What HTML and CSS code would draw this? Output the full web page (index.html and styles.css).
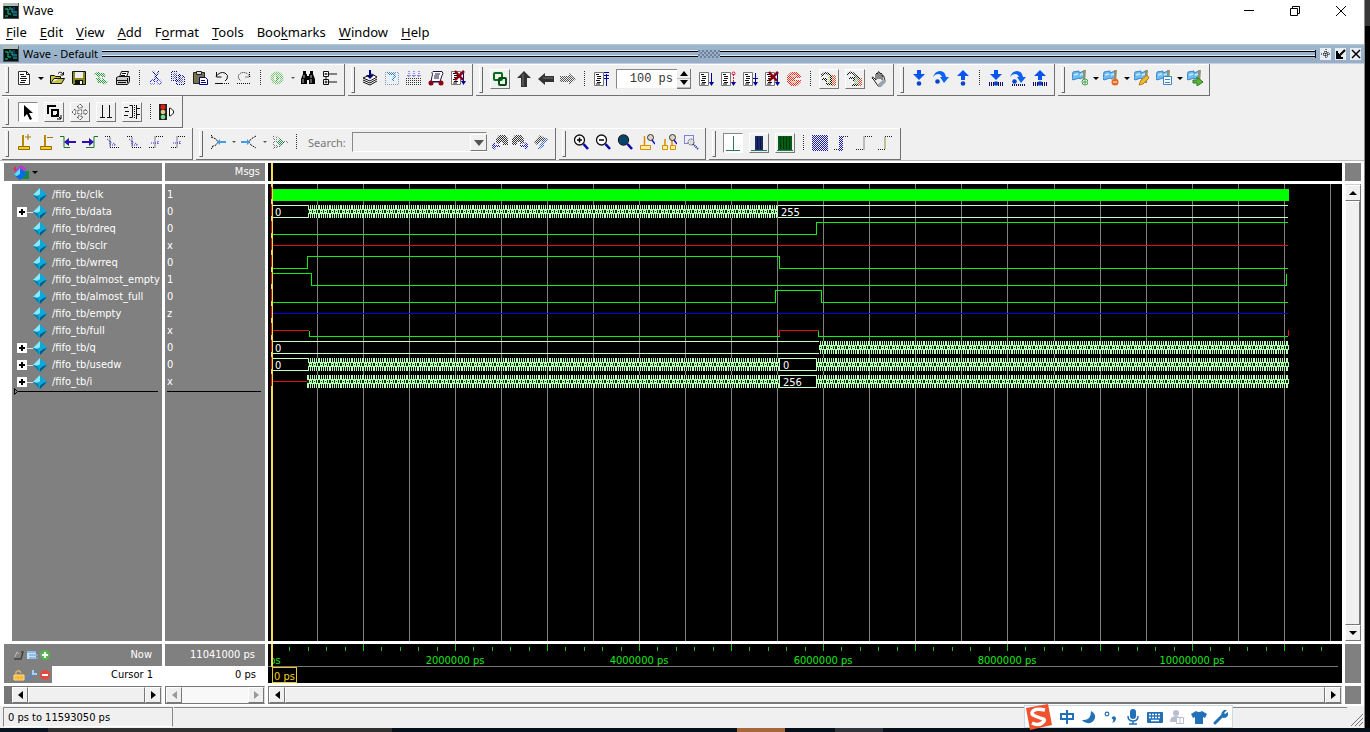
FILE: index.html
```html
<!DOCTYPE html>
<html lang="en">
<head>
<meta charset="utf-8">
<title>Wave</title>
<link rel="stylesheet" href="styles.css">
</head>
<body>
<svg class="defs" aria-hidden="true">
  <defs>
    <pattern id="dither" width="2" height="2" patternUnits="userSpaceOnUse"><path d="M0 0h1v1H0zM1 1h1v1H1z" fill="#f0f0f0"/></pattern>
    <pattern id="bluecheck" width="2" height="2" patternUnits="userSpaceOnUse"><path d="M0 0h1v1H0zM1 1h1v1H1z" fill="#1c1cb0"/></pattern>
    <symbol id="wave" viewBox="0 0 16 16"><path d="M0 0h16v16H0z" fill="#555"/><path d="M1 3h14v12H1z" fill="#021512"/><path d="M0 0h15v3H0z" fill="#b4bdb6"/><path d="M2 6h3v5h3M2 13h3M9 5v4h5M10 12h4M7 4v3" stroke="#1cc795" fill="none"/><path d="M9 10h5M11 4v4" stroke="#2454b8"/></symbol>
    <symbol id="doc" viewBox="0 0 16 16"><path d="M2.500 1.500h8l3 3v10h-11z" fill="#fff" stroke="#333"/><path d="M10.500 1.500v3h3M4 4.500h4M5 6.500h5M4 8.500h7M5 10.500h5M4 12.500h5" stroke="#111" fill="none"/></symbol>
    <symbol id="open" viewBox="0 0 16 16"><path d="M1.500 13V5.500h4l1 1h5V8M1.500 13.500h11l3-5H5z" fill="#c8c53b" stroke="#111"/><path d="M9 3.500q3-3 5 1M14.500 2v3h-3" stroke="#111" fill="none"/></symbol>
    <symbol id="save" viewBox="0 0 16 16"><path d="M1.500 1.500h13v13h-12l-1-1z" fill="#8a8a1c" stroke="#111"/><path d="M4 2h8v6H4z" fill="#eee"/><path d="M4 10h8v4H4z" fill="#111"/><path d="M9 11h2v3H9z" fill="#fff"/></symbol>
    <symbol id="refresh" viewBox="0 0 16 16"><path d="M1 4l5-3v2h5l2 4H9L7 5v3zM15 12l-5 3v-2H5L3 8h4l2 3V8z" fill="#2a9a3a"/></symbol>
    <symbol id="print" viewBox="0 0 16 16"><path d="M4.500 7l2-5.500h7l-2 5.500" fill="#fff" stroke="#111"/><path d="M1.500 7.500l2-1h11v5l-2 3h-11z" fill="#ccc" stroke="#111"/><path d="M2 10.500h11M3 12.500h8M7 3.500h4M6 5.500h4M12.500 8v5" stroke="#111"/></symbol>
    <symbol id="cut" viewBox="0 0 16 16"><path d="M5 1l5 9M11 1L6 10" stroke="#00008b" stroke-width="1.500"/><circle cx="4.500" cy="12" r="2.200" fill="none" stroke="#00f"/><circle cx="11" cy="12" r="2.200" fill="none" stroke="#00f"/></symbol>
    <symbol id="copy" viewBox="0 0 16 16"><path d="M1.500 1.500h6l2 2v7h-8zM6.500 5.500h6l2 2v7h-8z" fill="#ddd" stroke="#000090"/><path d="M3 4h4M3 6h4M3 8h3M8 8h5M8 10h5M8 12h5" stroke="#000090"/></symbol>
    <symbol id="paste" viewBox="0 0 16 16"><path d="M1.500 2.500h11v11h-11z" fill="#77744b" stroke="#222"/><path d="M4.500 1.500h5v3h-5z" fill="#ddd" stroke="#222"/><path d="M7.500 7.500h6l2 2v5h-8z" fill="#fff" stroke="#00007a"/><path d="M9 10.500h4M9 12.500h5" stroke="#00007a"/></symbol>
    <symbol id="undo" viewBox="0 0 16 16"><path d="M2 6.500Q6 1 11 3q4 2 2 6l-2 2M2.500 2v5h5M1 13.500h7" fill="none" stroke="#111"/><path d="M8 13.500h7" stroke="#111" stroke-dasharray="1 1"/></symbol>
    <symbol id="redo" viewBox="0 0 16 16"><path d="M14 6.500Q10 1 5 3q-4 2-2 6l2 2M13.500 2v5h-5M1 13.500h14" fill="none" stroke="#111" stroke-dasharray="1 1"/></symbol>
    <symbol id="go" viewBox="0 0 16 16"><circle cx="8" cy="8" r="6.500" fill="#79c779"/><circle cx="8" cy="8" r="3" fill="#fff"/><path d="M7 4l4 4-4 4z" fill="#3aa33a"/></symbol>
    <symbol id="binoc" viewBox="0 0 16 16"><path d="M3 1h3v3h1v2h2V4h1V1h3v3l2 5v5H9v-4H7v4H1V9l2-5z" fill="#050505"/><path d="M4 5v3M3 9v4M11 5v3M11 9v4" stroke="#bbb"/></symbol>
    <symbol id="tree" viewBox="0 0 16 16"><path d="M1.500 1.500h5v5h-5zM1.500 9.500h5v5h-5z" fill="#fff" stroke="#111"/><path d="M2.500 4h3M4 3v2M2.500 12h3M4 10.500v3M7 4h8M7 12h8M4 7v2" stroke="#111"/></symbol>
    <symbol id="layers" viewBox="0 0 16 16"><path d="M1 12l7 3 7-4M1 10l7 3 7-4M1 8l7 3 7-4-5-3z" fill="#fff" stroke="#111"/><path d="M7 0h2v5h3l-4 4-4-4h3z" fill="#00007c"/></symbol>
    <symbol id="ask" viewBox="0 0 16 16"><path d="M1.500 2.500h13v12h-13z" fill="#e6f2fa" stroke="#203a80" stroke-dasharray="1 1"/><path d="M5 4h5l1 2-2 3v2M3 2l3 2" stroke="#168ad0" stroke-width="2" fill="none"/></symbol>
    <symbol id="gridarrows" viewBox="0 0 16 16"><path d="M0 8.500h16M0 10.500h16M0 12.500h16M0 14.500h16" stroke="#333" stroke-dasharray="1 1"/><path d="M3 1v6M8 1v6M13 1v6M1 5l2 2 2-2M6 5l2 2 2-2M11 5l2 2 2-2" stroke="#3a3ae0" fill="none" stroke-dasharray="1 1"/></symbol>
    <symbol id="cart" viewBox="0 0 16 16"><path d="M5 1.500h9q2 2 0 4l-2 6H3l1-5q1-2 0-4z" fill="#fff" stroke="#171740"/><path d="M7 4h5M6 6h5M6 8h5M1 12h12" stroke="#171740"/><circle cx="3" cy="13" r="2.500" fill="#8b0012"/><circle cx="13" cy="13" r="2.500" fill="#8b0012"/></symbol>
    <symbol id="list" viewBox="0 0 16 16"><path d="M1.500 1.500h9v13h-9z" fill="#fff" stroke="#777"/><path d="M3 3.500h3M4 5.500h4M4 7.500h4M3 9.500h4M4 11.500h4M3 13h4" stroke="#111"/></symbol>
    <symbol id="down" viewBox="0 0 16 16"><path d="M13 2h1v9h2l-2.500 4-2.500-4h2z" fill="#00009a"/></symbol>
    <symbol id="cross" viewBox="0 0 16 16"><path d="M5 1l8 9M14 1l-9 9" stroke="#8b0010" stroke-width="2.500"/></symbol>
    <symbol id="up3" viewBox="0 0 16 16"><path d="M13.500 15V3M11 4.500h5M11 7.500h5M11 1.500h5" stroke="#00009a" fill="none"/></symbol>
    <symbol id="link" viewBox="0 0 16 16"><rect x="2" y="2" width="8" height="7" rx="1" fill="none" stroke="#006d1a" stroke-width="2"/><rect x="7" y="7" width="7" height="7" rx="1" fill="none" stroke="#004f12" stroke-width="2"/></symbol>
    <symbol id="arrowup" viewBox="0 0 16 16"><path d="M8 0l7 7h-4v9H5V7H1z" fill="#333"/><path d="M7 3v12" stroke="#777"/></symbol>
    <symbol id="arrowleft" viewBox="0 0 16 16"><path d="M0 8l7-6v3h9v6H7v3z" fill="#333"/><path d="M5 7h10" stroke="#777"/></symbol>
    <symbol id="arrowright" viewBox="0 0 16 16"><path d="M16 8L9 2v3H0v6h9v3z" fill="#555"/></symbol>
    <symbol id="stop" viewBox="0 0 16 16"><path d="M5 1h6l4 4v2H9v2h6v2l-4 4H5l-4-4V5z" fill="#f03018"/><path d="M5 5h5M5 11h5" stroke="#fff"/></symbol>
    <symbol id="profile" viewBox="0 0 16 16"><path d="M7 5h4v10H7z" fill="#d9cf55"/><path d="M11 4h4v11h-4z" fill="#e0563a"/><path d="M0 5q5-6 10 0v9M1 8h4v3M5 13h6" stroke="#111" stroke-width="2" fill="none"/></symbol>
    <symbol id="memory" viewBox="0 0 16 16"><path d="M7 6h4v9H7z" fill="#7ec77e"/><path d="M11 7h4v8h-4z" fill="#dc5040"/><path d="M0 4q4-5 8 0l5 4M2 7h5v3M5 14h6" stroke="#111" stroke-width="2" fill="none"/></symbol>
    <symbol id="hand" viewBox="0 0 16 16"><path d="M3 9L1 7q0-2 2 0l2 2V3q1-2 2 0V1q1-1 2 1v1q1-2 2 0v2q2-1 2 1l1 4-4 5H7z" fill="#eee" stroke="#222"/><path d="M7 3v5M9 3v5M11 4v5" stroke="#222"/><path d="M6 14l7-6 2 3-5 5z" fill="#9aa4b2"/></symbol>
    <symbol id="stepin" viewBox="0 0 16 16"><path d="M6 0h4v4h4L8 10 2 4h4z" fill="#0a55ee"/><circle cx="8" cy="13.500" r="2.300" fill="#0a44cc"/></symbol>
    <symbol id="stepover" viewBox="0 0 16 16"><path d="M0 7q2-6 7-6t6 6h3l-5 6-4-6h2Q8 4 5 4T0 7z" fill="#0d62f0"/><circle cx="4.500" cy="11.500" r="2.300" fill="#0a44cc"/></symbol>
    <symbol id="stepout" viewBox="0 0 16 16"><path d="M6 10h4V6h4L8 0 2 6h4z" fill="#0a55ee"/><circle cx="8" cy="13.500" r="2.300" fill="#0a44cc"/></symbol>
    <symbol id="bars" viewBox="0 0 16 16"><path d="M1.500 12v4M3.500 12v4M5.500 12v4M10.500 12v4M12.500 12v4M14.500 12v4" stroke="#101060"/></symbol>
    <symbol id="flags" viewBox="0 0 16 16"><path d="M1 2l6-1v2l5-2v6l-4 2-1-1-6 2-1-1z" fill="#6fbcf2" stroke="#3a86c6"/><path d="M2 5l4-1M8 5l3-1" stroke="#c9e9ff" stroke-width="1.500"/><path d="M11 0h3l-1 13h-2z" fill="#8f9470"/></symbol>
    <symbol id="pointer" viewBox="0 0 16 16"><path d="M4 1v12l3-3 3 6 2-1-3-6h4z" fill="#000"/></symbol>
    <symbol id="boxes" viewBox="0 0 16 16"><path d="M1 1h9v2H3v7H1zM5 5h8v8H5zM7 7v4h4V7z" fill="#000" fill-rule="evenodd"/><path d="M10 10l5 5M15 11v4h-4" stroke="#000" fill="none"/></symbol>
    <symbol id="move" viewBox="0 0 16 16"><path d="M8 0l3 3H9v4h4V5l3 3-3 3V9H9v4h2l-3 3-3-3h2V9H3v2L0 8l3-3v2h4V3H5z" fill="#fff" stroke="#111" stroke-dasharray="1 1"/></symbol>
    <symbol id="cursors2" viewBox="0 0 16 16"><path d="M4.500 1v12M11.500 1v12M2 13.500h5M9 13.500h5" stroke="#111"/></symbol>
    <symbol id="edges" viewBox="0 0 16 16"><path d="M0 3.500h4M1 7.500h4M0 11.500h4M12 4.500h4M12 10.500h4" stroke="#111"/><path d="M5.500 1.500h3v12h-3M12.500 1v14" fill="none" stroke="#111"/><path d="M10.500 1v14" stroke="#111" stroke-dasharray="1 1"/></symbol>
    <symbol id="traffic" viewBox="0 0 16 16"><path d="M0 0h8v16H0z" fill="#222"/><circle cx="4" cy="3" r="2.500" fill="#f01515"/><circle cx="4" cy="8" r="2.300" fill="#d5cf83"/><circle cx="4" cy="13" r="2.300" fill="#6fe08e"/><path d="M10.500 4v8h1l3-3V7l-3-3z" fill="#fff" stroke="#111"/></symbol>
    <symbol id="addcur" viewBox="0 0 16 16"><path d="M2.500 12.500h11v3h-11z" fill="#f4cf1c" stroke="#946c00"/><path d="M7 1v11" stroke="#b88900" stroke-width="2"/></symbol>
    <symbol id="edgeprev" viewBox="0 0 16 16"><path d="M0 2.500h4v11h6" stroke="#167a1c" fill="none"/><path d="M4 8l5-4v3h7v2H9v3z" fill="#2f10b4"/></symbol>
    <symbol id="edgenext" viewBox="0 0 16 16"><path d="M16 2.500h-4v11H4" stroke="#167a1c" fill="none"/><path d="M12 8L7 4v3H0v2h7v3z" fill="#2f10b4"/></symbol>
    <symbol id="dfall" viewBox="0 0 16 16"><path d="M1 2.500h5v11h9" stroke="#111" fill="none" stroke-dasharray="1 1"/><path d="M3 5l5 4M6 7v4h5M9 9l3 2" stroke="#2b2bd5" fill="none" stroke-dasharray="1 1"/></symbol>
    <symbol id="drise" viewBox="0 0 16 16"><path d="M1 13.500h6v-11h8" stroke="#111" fill="none" stroke-dasharray="1 1"/><path d="M3 9h8M10 7v4" stroke="#2b2bd5" fill="none" stroke-dasharray="1 1"/></symbol>
    <symbol id="split" viewBox="0 0 16 16"><path d="M1 3l5 2 2 3-2 3-5 2M1 1l2 2M1 15l2-2" stroke="#111" stroke-dasharray="2 1" fill="none"/><path d="M7 8l3-3v2h6v2h-6v2z" fill="#459be5"/></symbol>
    <symbol id="merge" viewBox="0 0 16 16"><path d="M15 2l-5 3-2 3 2 3 5 3" stroke="#111" stroke-dasharray="2 1" fill="none"/><path d="M9 8L6 5v2H0v2h6v2z" fill="#459be5"/></symbol>
    <symbol id="expand" viewBox="0 0 16 16"><path d="M1 2l7 2 4 4-4 4-7 2M1 5h4M1 8h5M1 11h4M11 8h5" stroke="#111" stroke-dasharray="2 1" fill="none"/><path d="M5 8l3-4 4 4-4 4z" fill="#279151"/></symbol>
    <symbol id="findp" viewBox="0 0 16 16"><path d="M4 9V5l3-4h6l3 4v6h-5V8H8v2z" fill="#333"/><path d="M0 12h8M3 9l-3 3 3 3" stroke="#2020d0" stroke-width="2" fill="none"/></symbol>
    <symbol id="findn" viewBox="0 0 16 16"><path d="M12 9V5L9 1H3L0 5v6h5V8h3v2z" fill="#333"/><path d="M16 12H8M13 9l3 3-3 3" stroke="#2020d0" stroke-width="2" fill="none"/></symbol>
    <symbol id="findo" viewBox="0 0 16 16"><path d="M1 8l6-7 3 2 5 2-4 4-3-2-4 4z" fill="#444"/><path d="M7 12l7-7M5 15l6-4" stroke="#3770e0" stroke-width="2"/></symbol>
    <symbol id="glass" viewBox="0 0 16 16"><circle cx="6.500" cy="6" r="5" fill="#fff" stroke="#111" stroke-width="1.300"/><path d="M10.500 10l4.500 5" stroke="#0808ae" stroke-width="2.600"/></symbol>
    <symbol id="smallglass" viewBox="0 0 16 16"><circle cx="11.500" cy="3.500" r="3" fill="#d8d5c5" stroke="#333"/><path d="M13 6l3 4" stroke="#1414c0" stroke-width="1.500"/></symbol>
    <symbol id="selzoom" viewBox="0 0 16 16"><path d="M1.500 1.500h9v8h-9z" fill="none" stroke="#1111c0" stroke-dasharray="1 1"/><circle cx="8" cy="8" r="3" fill="#ddd" stroke="#333" stroke-dasharray="1 1"/><path d="M10 10l5 5" stroke="#14149a" stroke-width="2" stroke-dasharray="1 1"/></symbol>
    <symbol id="sig" viewBox="0 0 16 16"><path d="M8 0l8 8-8 8-8-8z" fill="#08a9dc"/><path d="M8 0v7L4 9 0 8z" fill="#8ee8fa"/><path d="M8 16l8-8-4 1-4 3z" fill="#035b83"/><path d="M0 8l5 1 3 7z" fill="#087ba6"/></symbol>
  </defs>
</svg>

<div class="app">
  <header class="titlebar">
    <svg class="i16"><use href="#wave"/></svg><h1>Wave</h1>
    <div class="wincontrols">
      <button aria-label="Minimize"><svg class="i12"><path d="M1 5.500h10" stroke="#000"/></svg></button>
      <button aria-label="Restore"><svg class="i12"><path d="M1.500 3.500h7v7h-7zM3.500 3.500v-2h7v7h-2" stroke="#000" fill="none"/></svg></button>
      <button aria-label="Close"><svg class="i12"><path d="M1 1l10 10M11 1L1 11" stroke="#000" fill="none"/></svg></button>
    </div>
  </header>
  <nav class="menubar">
    <button><u>F</u>ile</button><button><u>E</u>dit</button><button><u>V</u>iew</button><button><u>A</u>dd</button><button>F<u>o</u>rmat</button><button><u>T</u>ools</button><button>Boo<u>k</u>marks</button><button><u>W</u>indow</button><button><u>H</u>elp</button>
  </nav>

  <div class="panebar">
    <svg class="i16"><use href="#wave"/></svg><h2>Wave - Default</h2>
    <div class="ridge"><span class="grab"></span></div>
    <button aria-label="Float"><svg class="i10"><path d="M5 0v10M0 5h10M3 3h4v4H3z" stroke="#000" fill="none" stroke-dasharray="1 1"/></svg></button>
    <button aria-label="Undock"><svg class="i10"><path d="M9 1L3 7M1 2v7h6M2 4v4h3" stroke="#000" stroke-width="2" fill="none"/></svg></button>
    <button aria-label="Close pane"><svg class="i10"><path d="M1 1l8 8M9 1L1 9" stroke="#000" stroke-width="1.500"/></svg></button>
  </div>

  <div class="toolrow">
    <div class="toolbar">
      <button class="t" aria-label="New"><svg><use href="#doc"/></svg></button><button class="dd wide" aria-label="New options"></button>
      <button class="t" aria-label="Open"><svg><use href="#open"/></svg></button>
      <button class="t" aria-label="Save"><svg><use href="#save"/></svg></button>
      <button class="t" aria-label="Reload"><svg><use href="#refresh"/><rect width="16" height="16" fill="url(#dither)"/></svg></button>
      <button class="t" aria-label="Print"><svg><use href="#print"/></svg></button>
      <i class="sep"></i>
      <button class="t" aria-label="Cut"><svg><use href="#cut"/><rect width="16" height="16" fill="url(#dither)"/></svg></button>
      <button class="t" aria-label="Copy"><svg><use href="#copy"/><rect width="16" height="16" fill="url(#dither)"/></svg></button>
      <button class="t" aria-label="Paste"><svg><use href="#paste"/></svg></button>
      <button class="t" aria-label="Undo"><svg><use href="#undo"/></svg></button>
      <button class="t" aria-label="Redo"><svg><use href="#redo"/></svg></button>
      <i class="sep"></i>
      <button class="t" aria-label="Find"><svg><use href="#go"/><rect width="16" height="16" fill="url(#dither)"/></svg></button><button class="dd dim" aria-label="Find options"></button>
      <button class="t" aria-label="Search"><svg><use href="#binoc"/></svg></button>
      <button class="t" aria-label="Collapse all"><svg><use href="#tree"/></svg></button>
    </div>
    <div class="toolbar">
      <button class="t" aria-label="Compile"><svg><use href="#layers"/></svg></button>
      <button class="t" aria-label="Compile out of date"><svg><use href="#ask"/><rect width="16" height="16" fill="url(#dither)"/></svg></button>
      <button class="t" aria-label="Compile all"><svg><use href="#gridarrows"/></svg></button>
      <button class="t" aria-label="Simulate"><svg><use href="#cart"/></svg></button>
      <button class="t" aria-label="Break"><svg><use href="#list"/><use href="#down"/><use href="#cross"/></svg></button>
    </div>
    <div class="toolbar low">
      <button class="t raised" aria-label="Link"><svg><use href="#link"/></svg></button>
      <button class="t" aria-label="Environment up"><svg><use href="#arrowup"/></svg></button>
      <button class="t" aria-label="Back"><svg><use href="#arrowleft"/></svg></button>
      <button class="t" aria-label="Forward"><svg><use href="#arrowright"/><rect width="16" height="16" fill="url(#dither)"/></svg></button>
      <i class="sep"></i>
      <button class="t" aria-label="Restart"><svg><use href="#list"/><use href="#up3"/></svg></button>
      <div class="spin"><input type="text" value="100 ps" aria-label="Run length"><div><button class="up" aria-label="Increase"></button><button class="dn" aria-label="Decrease"></button></div></div>
      <button class="t" aria-label="Run"><svg><use href="#list"/><use href="#down"/></svg></button>
      <button class="t" aria-label="Continue run"><svg><use href="#list"/><path d="M13.500 3v8" stroke="#d01840" stroke-dasharray="2 1"/><path d="M11 11h5l-2.500 4z" fill="#00009a"/><circle cx="13.500" cy="2.500" r="1.500" fill="none" stroke="#d01840"/></svg></button>
      <button class="t" aria-label="Run all"><svg><use href="#list"/><use href="#down"/><path d="M11 7.500h5" stroke="#00009a"/></svg></button>
      <button class="t" aria-label="Break run"><svg><use href="#list"/><use href="#down"/><use href="#cross"/></svg></button>
      <button class="t" aria-label="Stop"><svg><use href="#stop"/><rect width="16" height="16" fill="url(#dither)"/></svg></button>
      <i class="sep"></i>
      <button class="t raised" aria-label="Performance profiling"><svg><use href="#profile"/><rect width="16" height="16" fill="url(#dither)"/></svg></button>
      <button class="t raised" aria-label="Memory profiling"><svg><use href="#memory"/><rect width="16" height="16" fill="url(#dither)"/></svg></button>
      <button class="t" aria-label="Edit breakpoints"><svg><use href="#hand"/></svg></button>
    </div>
    <div class="toolbar">
      <button class="t" aria-label="Step into"><svg><use href="#stepin"/></svg></button>
      <button class="t" aria-label="Step over"><svg><use href="#stepover"/></svg></button>
      <button class="t" aria-label="Step out"><svg><use href="#stepout"/></svg></button>
      <i class="sep"></i>
      <button class="t" aria-label="Step into current"><svg><use href="#stepin"/><use href="#bars"/></svg></button>
      <button class="t" aria-label="Step over current"><svg><use href="#stepover"/><path d="M2 15h14" stroke="#101060" stroke-width="2" stroke-dasharray="1 1"/></svg></button>
      <button class="t" aria-label="Step out current"><svg><use href="#stepout"/><use href="#bars"/></svg></button>
    </div>
    <div class="toolbar">
      <button class="t" aria-label="Add bookmark"><svg><use href="#flags"/><circle cx="13" cy="12" r="3" fill="#fff" stroke="#3d9b42"/><path d="M13 10v4M11 12h4" stroke="#3d9b42"/></svg></button><button class="dd" aria-label="Add bookmark options"></button>
      <button class="t" aria-label="Delete bookmark"><svg><use href="#flags"/><circle cx="12" cy="12" r="3.500" fill="#e8661e"/><path d="M10 12h4" stroke="#fff"/></svg></button><button class="dd" aria-label="Delete bookmark options"></button>
      <button class="t" aria-label="Edit bookmark"><svg><use href="#flags"/><path d="M5 15l2-5 6-5 2 3-6 6z" fill="#f0b92b" stroke="#b57c12"/></svg></button>
      <button class="t" aria-label="Bookmarks list"><svg><use href="#flags"/><path d="M7.500 6.500h8v8h-8z" fill="#fff" stroke="#3b84c8"/><path d="M9 9.500h5M9 12.500h5" stroke="#3b84c8"/></svg></button><button class="dd" aria-label="Bookmark list options"></button>
      <button class="t" aria-label="Go to bookmark"><svg><use href="#flags"/><path d="M6 10h4V7l6 5-6 4v-3H6z" fill="#5cb33c" stroke="#2f7a22"/></svg></button>
    </div>
  </div>

  <div class="toolrow mid">
    <div class="toolbar">
      <button class="t raised on" aria-label="Select mode"><svg><use href="#pointer"/></svg></button>
      <button class="t raised" aria-label="Zoom mode"><svg><use href="#boxes"/></svg></button>
      <button class="t raised" aria-label="Pan mode"><svg><use href="#move"/></svg></button>
      <button class="t raised" aria-label="Two cursor mode"><svg><use href="#cursors2"/></svg></button>
      <button class="t raised" aria-label="Edit mode"><svg><use href="#edges"/></svg></button>
      <i class="sep"></i>
      <button class="t" aria-label="Stop drawing"><svg><use href="#traffic"/></svg></button>
    </div>
  </div>

  <div class="toolrow">
    <div class="toolbar">
      <button class="t" aria-label="Insert cursor"><svg><use href="#addcur"/><path d="M12 0v6M9 3h6" stroke="#a27a00"/></svg></button>
      <button class="t" aria-label="Delete cursor"><svg><use href="#addcur"/><path d="M9 3.500h6" stroke="#a27a00"/></svg></button>
      <button class="t" aria-label="Previous transition"><svg><use href="#edgeprev"/></svg></button>
      <button class="t" aria-label="Next transition"><svg><use href="#edgenext"/></svg></button>
      <button class="t" aria-label="Previous falling edge"><svg><use href="#dfall"/></svg></button>
      <button class="t" aria-label="Next falling edge"><svg><use href="#dfall"/></svg></button>
      <button class="t" aria-label="Previous rising edge"><svg><use href="#drise"/></svg></button>
      <button class="t" aria-label="Next rising edge"><svg><use href="#drise"/></svg></button>
    </div>
    <div class="toolbar">
      <button class="t" aria-label="Expand time"><svg><use href="#split"/></svg></button><button class="dd dim" aria-label="Expand options"></button>
      <button class="t" aria-label="Collapse time"><svg><use href="#merge"/></svg></button><button class="dd dim" aria-label="Collapse options"></button>
      <button class="t" aria-label="Expand full"><svg><use href="#expand"/><rect width="16" height="16" fill="url(#dither)"/></svg></button>
      <i class="sep"></i>
      <label for="search">Search:</label>
      <div class="combo"><select id="search"><option></option></select><span class="comboarrow"><svg class="i12"><path d="M1 3h10L6 9z" fill="#555"/></svg></span></div>
      <button class="t near" aria-label="Search backward"><svg><use href="#findp"/><rect width="16" height="16" fill="url(#dither)"/></svg></button>
      <button class="t near" aria-label="Search forward"><svg><use href="#findn"/><rect width="16" height="16" fill="url(#dither)"/></svg></button>
      <button class="t wide" aria-label="Search options"><svg><use href="#findo"/><rect width="16" height="16" fill="url(#dither)"/></svg></button>
    </div>
    <div class="toolbar">
      <button class="t" aria-label="Zoom in"><svg><use href="#glass"/><path d="M4 6h5M6.500 3.500v5" stroke="#000" stroke-width="1.500"/></svg></button>
      <button class="t" aria-label="Zoom out"><svg><use href="#glass"/><path d="M4 6h5" stroke="#000" stroke-width="1.500"/></svg></button>
      <button class="t" aria-label="Zoom full"><svg><use href="#glass"/><circle cx="6.500" cy="6" r="4.700" fill="#08436c"/></svg></button>
      <button class="t" aria-label="Zoom cursor"><svg><path d="M1.500 11.500h10v4h-10z" fill="#fff0a0" stroke="#dc8a00"/><path d="M5.500 2v9" stroke="#dc8a00" stroke-width="1.500"/><use href="#smallglass"/></svg></button>
      <button class="t" aria-label="Zoom between cursors"><svg><path d="M1.500 11.500h5v4h-5zM9.500 11.500h5v4h-5z" fill="#fff0a0" stroke="#dc8a00"/><path d="M4 5v6M11 2v9" stroke="#dc8a00" stroke-width="1.500"/><use href="#smallglass"/></svg></button>
      <button class="t" aria-label="Zoom selection"><svg><use href="#selzoom"/></svg></button>
    </div>
    <div class="toolbar low">
      <button class="t raised on" aria-label="Show single cursor"><svg><path d="M8.500 1v14M1 15.500h14" stroke="#28795b"/></svg></button>
      <button class="t raised" aria-label="Show blue band"><svg><path d="M4 1h8v14H4z" fill="#172a66"/><path d="M6.500 2v12M9.500 2v12" stroke="#0b1538"/><path d="M0 15.500h16" stroke="#28795b"/></svg></button>
      <button class="t raised" aria-label="Show green band"><svg><path d="M1 1h14v14H1z" fill="#035c12"/><path d="M3.500 2v12M6.500 2v12M9.500 2v12M12.500 2v12" stroke="#0a3510"/><path d="M0 15.500h16" stroke="#28795b"/></svg></button>
      <i class="sep"></i>
      <button class="t" aria-label="Fill"><svg><rect width="16" height="16" fill="url(#bluecheck)"/></svg></button>
      <button class="t" aria-label="Fill edge"><svg><path d="M5 1h4v15H5z" fill="url(#bluecheck)"/><path d="M0 14.500h5M9 1.500h6" stroke="#222" stroke-dasharray="1 1"/></svg></button>
      <button class="t" aria-label="Rising edge"><svg><path d="M0 14.500h8v-13h8" stroke="#222" fill="none" stroke-dasharray="1 1"/></svg></button>
      <button class="t" aria-label="Event edge"><svg><path d="M0 14.500h7v-13h8" stroke="#222" fill="none" stroke-dasharray="1 1"/><path d="M6.500 3v10" stroke="#c8c83c" stroke-dasharray="1 1"/></svg></button>
    </div>
  </div>

  <main class="wave">
    <div class="head namehead"><svg class="i20"><path d="M4 7l6-5 6 4-6 4z" fill="#b63bd0"/><path d="M8 8h10v8H8z" fill="#148a42"/><path d="M3 12l6-7 7 6-7 6z" fill="#0a6be0"/><path d="M9 5v6l-3 2-3-1z" fill="#5fe0ff"/><path d="M2 6l3-3v6z" fill="#e52b55"/></svg><button class="dd wide" aria-label="Column options"></button></div>
    <div class="head msgs">Msgs</div>
    <div class="head black"><span class="cursorline"></span></div>
    <div class="head"></div>

    <div class="names">
      <ul>
        <li><svg class="i14"><use href="#sig"/></svg>/fifo_tb/clk</li>
        <li><button class="plus" aria-label="Expand data"></button><svg class="i14"><use href="#sig"/></svg>/fifo_tb/data</li>
        <li><svg class="i14"><use href="#sig"/></svg>/fifo_tb/rdreq</li>
        <li><svg class="i14"><use href="#sig"/></svg>/fifo_tb/sclr</li>
        <li><svg class="i14"><use href="#sig"/></svg>/fifo_tb/wrreq</li>
        <li><svg class="i14"><use href="#sig"/></svg>/fifo_tb/almost_empty</li>
        <li><svg class="i14"><use href="#sig"/></svg>/fifo_tb/almost_full</li>
        <li><svg class="i14"><use href="#sig"/></svg>/fifo_tb/empty</li>
        <li><svg class="i14"><use href="#sig"/></svg>/fifo_tb/full</li>
        <li><button class="plus" aria-label="Expand q"></button><svg class="i14"><use href="#sig"/></svg>/fifo_tb/q</li>
        <li><button class="plus" aria-label="Expand usedw"></button><svg class="i14"><use href="#sig"/></svg>/fifo_tb/usedw</li>
        <li><button class="plus" aria-label="Expand i"></button><svg class="i14"><use href="#sig"/></svg>/fifo_tb/i</li>
      </ul>
      <div class="endline"><svg class="endmark"><path d="M.5.500l3 3-3 3z" fill="none" stroke="#000"/></svg><i></i></div>
    </div>
    <div class="values">
      <ul><li>1</li><li>0</li><li>0</li><li>x</li><li>0</li><li>1</li><li>0</li><li>z</li><li>x</li><li>0</li><li>0</li><li>x</li></ul>
      <div class="endline"><i></i></div>
    </div>
    <div class="plot">
      <svg class="fill" shape-rendering="crispEdges">
        <defs>
          <pattern id="bus" width="11" height="13" patternUnits="userSpaceOnUse" y="205">
            <path d="M0 0h11v13H0z" fill="#b4ffb4"/>
            <path d="M1 0h1v4H1zM3 0h1v4H3zM5 0h1v4H5zM7 0h1v4H7zM9 0h1v4H9zM1 9h1v4H1zM3 9h1v4H3zM5 9h1v4H5zM7 9h1v4H7zM9 9h1v4H9z" fill="#000"/>
            <path d="M0 5h1v3H0zM2 6h1v1H2zM4 5h1v3H4zM6 6h1v1H6zM8 5h1v3H8zM10 5h1v3h-1z" fill="#0b300b"/>
          </pattern>
        </defs>
        <g transform="translate(-268 -184)">
          <path d="M317.500 184v2000M363.500 184v2000M409.500 184v2000M455.500 184v2000M501.500 184v2000M547.500 184v2000M593.500 184v2000M639.500 184v2000M685.500 184v2000M731.500 184v2000M777.500 184v2000M823.500 184v2000M869.500 184v2000M915.500 184v2000M961.500 184v2000M1007.500 184v2000M1054.500 184v2000M1100.500 184v2000M1146.500 184v2000M1192.500 184v2000M1238.500 184v2000M1284.500 184v2000M1330.500 184v2000" stroke="#808080"/>
          <rect x="272" y="189" width="1017" height="12" fill="#0f0"/>
          <g fill="none" stroke="#c8ffc8">
            <path d="M272 205.500h36M272 217.500h36M778 205.500h510M778 217.500h510M777.500 206v11M272 341.500h547M272 353.500h547"/>
            <rect x="272.500" y="358.500" width="36" height="12" fill="#000"/>
            <rect x="779.500" y="358.500" width="37" height="12" fill="#000"/>
            <rect x="779.500" y="375.500" width="37" height="12" fill="#000"/>
          </g>
          <g fill="none" stroke="#10f010">
            <path d="M272 234.500h544.500v-12H1288M272 268.500h35.500v-12h472v12H1288M272 273.500h39.500v12h975v-12M272 302.500h503.500v-12h46v12H1288M309.500 331v5.500H779.500M818.500 331v5.500H1288"/>
          </g>
          <path d="M272 245.500h1016M272 330.500h37M779.500 336v-5.500h39M1288.500 330v6M272 381.500h35" fill="none" stroke="#e01010"/>
          <path d="M272 313.500h1016" stroke="#0000e0"/>
          <path d="M308 205h469v13H308z" fill="url(#bus)"/>
          <g transform="translate(0 136)"><path d="M819 205h470v13H819z" fill="url(#bus)"/></g>
          <g transform="translate(0 153)"><path d="M308 205h471v13H308zM817 205h472v13H817z" fill="url(#bus)"/></g>
          <g transform="translate(0 170)"><path d="M307 205h472v13H307zM817 205h472v13H817z" fill="url(#bus)"/></g>
          <path d="M272 184v2000" stroke="#f5dc50" stroke-width="2"/>
          <path d="M271.500 187v200" stroke="#d01010" stroke-dasharray="12 5"/>
          <g class="busval"><text x="275" y="216">0</text><text x="781" y="216">255</text><text x="275" y="352">0</text><text x="275" y="369">0</text><text x="783" y="369">0</text><text x="783" y="386">256</text></g>
        </g>
      </svg>
    </div>
    <div class="vscroll"><button class="sb" aria-label="Scroll up"><b class="tri u"></b></button><div class="thumb"></div><button class="sb" aria-label="Scroll down"><b class="tri d"></b></button></div>

    <div class="curs">
      <div class="now"><span class="minis"><svg class="i12"><path d="M1 10h7l2-7H8" stroke="#444" stroke-width="1.500" fill="none"/><path d="M2 8l2-5 2 2" stroke="#bbb" fill="none"/></svg><svg class="i12"><path d="M1 2h9v8H1z" fill="#c8e2f7"/><path d="M1 3h9M3 6h9M3 9h9" stroke="#7eaede" stroke-width="1.500"/></svg><svg class="i12"><circle cx="6" cy="6" r="5" fill="#54b94b"/><path d="M6 3v6M3 6h6" stroke="#fff" stroke-width="2"/></svg></span>Now</div>
      <div class="cur"><span class="minis"><svg class="i12"><path d="M1 6h10v5H1z" fill="#f8ba38" stroke="#ffe08a"/><path d="M3 6V3q3-3 5 1" stroke="#d8b467" stroke-width="1.500" fill="none"/></svg><svg class="i12"><path d="M1 11l7-7" stroke="#4d86cf" stroke-width="2"/><path d="M7 1v4h4" stroke="#a8cdf3" stroke-width="2" fill="none"/></svg><svg class="i12"><circle cx="6" cy="6" r="5" fill="#e34b42"/><path d="M3 6h6" stroke="#fff" stroke-width="2"/></svg></span><span class="curname">Cursor 1</span></div>
    </div>
    <div class="curs"><div class="now">11041000 ps</div><div class="curval">0 ps</div></div>
    <div class="ruler">
      <svg class="fill" shape-rendering="crispEdges">
        <g transform="translate(-268 -644)">
          <path d="M289.500 647v4M308.500 647v4M326.500 647v4M345.500 647v4M363.500 644v7M381.500 647v4M400.500 647v4M418.500 647v4M437.500 647v4M455.500 644v7M473.500 647v4M492.500 647v4M510.500 647v4M529.500 647v4M547.500 644v7M565.500 647v4M584.500 647v4M602.500 647v4M621.500 647v4M639.500 644v7M657.500 647v4M676.500 647v4M694.500 647v4M713.500 647v4M731.500 644v7M749.500 647v4M768.500 647v4M786.500 647v4M805.500 647v4M823.500 644v7M841.500 647v4M860.500 647v4M878.500 647v4M897.500 647v4M915.500 644v7M933.500 647v4M952.500 647v4M970.500 647v4M989.500 647v4M1007.500 644v7M1025.500 647v4M1044.500 647v4M1062.500 647v4M1081.500 647v4M1100.500 644v7M1118.500 647v4M1137.500 647v4M1155.500 647v4M1174.500 647v4M1192.500 644v7M1210.500 647v4M1229.500 647v4M1247.500 647v4M1266.500 647v4M1284.500 644v7M1302.500 647v4M1321.500 647v4" stroke="#20c020"/>
          <path d="M268 666.500h1070" stroke="#777"/>
          <g class="ticks"><text x="455" y="664">2000000 ps</text><text x="639" y="664">4000000 ps</text><text x="823" y="664">6000000 ps</text><text x="1007" y="664">8000000 ps</text><text x="1192" y="664">10000000 ps</text><text x="275" y="664">ps</text></g>
          <path d="M268 644h3v22h-3z" fill="#000"/>
          <path d="M272 644v23" stroke="#f5dc50" stroke-width="2"/>
          <rect x="272.500" y="667.500" width="24" height="15" fill="#000" stroke="#e6cb28"/>
          <text class="curtext" x="274" y="680">0 ps</text>
        </g>
      </svg>
    </div>
    <div class="head"></div>

    <div class="hs names-hs"><button class="sb" aria-label="Scroll left"><b class="tri l"></b></button><div class="thumb"></div><button class="sb" aria-label="Scroll right"><b class="tri r"></b></button></div>
    <div class="hs off"><button class="sb" disabled aria-label="Scroll left"><b class="tri l"></b></button><div class="trough"></div><button class="sb" disabled aria-label="Scroll right"><b class="tri r"></b></button></div>
    <div class="hs"><button class="sb" aria-label="Scroll left"><b class="tri l"></b></button><div class="thumb"></div><button class="sb" aria-label="Scroll right"><b class="tri r"></b></button></div>
    <div class="head"></div>
  </main>

  <footer class="status"><span class="range">0 ps to 11593050 ps</span><span class="rest"></span>
    <svg class="i16 gripper"><path d="M3 15L15 3M7 15l8-8M11 15l4-4" stroke="#777"/></svg>
  </footer>
  <div class="ime">
    <svg class="logo" viewBox="0 0 28 26"><path d="M1 4L23 0l4 21-22 5z" fill="#f0522d"/><path d="M20 6q-9-2-12 1t2 5 8 3-1 4-10 0" fill="none" stroke="#fff" stroke-width="3.500"/></svg>
    <button aria-label="Chinese mode"><svg class="i16"><path d="M2 5h12v5H2zM8 1v14" fill="none" stroke="#2271b8" stroke-width="2"/></svg></button>
    <button aria-label="Half width"><svg class="i16"><path d="M10 2q5 3 4 7-2 6-8 5-4-1-5-3 9 1 9-9z" fill="#2271b8"/></svg></button>
    <button aria-label="Punctuation"><svg class="i16"><circle cx="4" cy="5" r="1.800" fill="none" stroke="#2271b8" stroke-width="1.200"/><path d="M9 8q3-2 4 1 0 4-4 5 2-2 1-4-2 0-1-2z" fill="#2271b8"/></svg></button>
    <button aria-label="Voice"><svg class="i16"><rect x="5" y="0" width="6" height="10" rx="3" fill="#2271b8"/><path d="M3 7q0 5 5 5t5-5M8 12v3M4 15h8" fill="none" stroke="#2271b8" stroke-width="1.500"/></svg></button>
    <button aria-label="Keyboard"><svg class="i16"><rect y="3" width="16" height="11" rx="1" fill="#2271b8"/><path d="M2 5.500h12M2 8.500h12" stroke="#fff" stroke-width="1.500" stroke-dasharray="2 1"/><path d="M4 11.500h8" stroke="#fff" stroke-width="1.500"/></svg></button>
    <button aria-label="Account"><svg class="i16"><circle cx="7" cy="4" r="3" fill="#b8bdd0"/><path d="M1 13q0-6 6-6t5 6z" fill="#b8bdd0"/><path d="M7.500 8.500h7v6h-7z" fill="#fff" stroke="#b8bdd0"/><path d="M11 9v5" stroke="#b8bdd0"/></svg></button>
    <button aria-label="Skin"><svg class="i16"><path d="M5 2q3 2 6 0l5 3-2 4-2-1v7H4V8L2 9 0 5z" fill="#2271b8"/></svg></button>
    <button aria-label="Tools"><svg class="i16"><path d="M2 14l7-7" stroke="#2271b8" stroke-width="3" stroke-linecap="round"/><path d="M14 1l-3 3 1 1 3-2q1 6-5 6-4-4 1-8z" fill="#2271b8"/></svg></button>
  </div>
</div>
<div class="taskbar"><i class="a"></i><i class="b"></i></div>
</body>
</html>
```
FILE: styles.css
```css
* { box-sizing: border-box; }
html, body { height: 100%; }
body {
  margin: 0;
  background: linear-gradient(#383838 26px, #000 26px);
  display: flex;
  flex-direction: column;
  overflow: hidden;
  font-family: "DejaVu Sans Condensed", "Noto Sans", sans-serif;
  font-size: 11px;
  color: #000;
}
button { border: 0; padding: 0; margin: 0; background: none; font: inherit; color: inherit; flex: none; }
h1, h2, ul { margin: 0; padding: 0; font-weight: normal; list-style: none; }
svg { display: block; flex: none; }
.defs { position: absolute; width: 0; height: 0; }
.i10 { width: 10px; height: 10px; }
.i12 { width: 12px; height: 12px; }
.i14 { width: 14px; height: 14px; }
.i16 { width: 16px; height: 16px; }
.i20 { width: 20px; height: 18px; }
.fill { width: 100%; height: 100%; }

.app {
  flex: 1;
  min-height: 0;
  margin-right: 5px;
  display: flex;
  flex-direction: column;
  background: #f0f0f0;
  position: relative;
  border-right: 1px solid #8a8a8a;
}
.titlebar { display: flex; align-items: center; gap: 4px; height: 22px; padding-left: 3px; background: #fff; font-family: "Noto Sans", sans-serif; }
.titlebar h1 { font-size: 12px; line-height: 22px; }
.wincontrols { margin-left: auto; display: flex; gap: 34px; padding-right: 17px; }
.menubar { display: flex; gap: 13px; height: 23px; padding: 0 6px; background: #fff; font: 13px/20px "Noto Sans", sans-serif; border-bottom: 1px solid #b8c6d6; align-items: flex-start; }
.menubar u { text-underline-offset: 2px; }

.panebar { display: flex; align-items: center; height: 19px; padding: 0 3px; gap: 4px; background: linear-gradient(#9bb8cc, #98adc8); border-bottom: 1px solid #c5d0dc; }
.panebar h2 { font-family: "Noto Sans", sans-serif; font-size: 11px; line-height: 16px; }
.panebar button { width: 11px; height: 12px; background: #e8eef3; display: flex; align-items: center; justify-content: center; }
.ridge { flex: 1; height: 8px; border-right: 1px solid #111; background: linear-gradient(#dceaf4 1px, #000 1px, #000 2px, transparent 2px, transparent 5px, #dceaf4 5px, #dceaf4 6px, #000 6px, #000 7px, transparent 7px); display: flex; justify-content: center; }
.grab { width: 22px; height: 8px; background: repeating-conic-gradient(#9ab1c9 0 25%, #6e8299 0 50%) 0 0 / 4px 4px; }

.toolrow { display: flex; gap: 3px; height: 32px; padding-left: 2px; }
.toolbar { display: flex; align-items: center; height: 32px; padding: 0 3px 3px 11px; border-right: 1px solid #707070; border-bottom: 1px solid #707070; box-shadow: inset 0 1px #fff; position: relative; }
.toolbar.low { padding-bottom: 1px; }
.toolbar::before { content: ""; position: absolute; left: 3px; top: 3px; bottom: 2px; width: 2px; border-left: 1px solid #fff; border-right: 1px solid #666; border-bottom: 1px solid #666; }
.mid .toolbar { padding: 0 4px 0 13px; }
.t { width: 22px; height: 20px; display: flex; align-items: center; justify-content: center; }
.t svg { width: 16px; height: 16px; }
.t.near { width: 20px; }
.t.raised { width: 20px; margin: 0 3px; border-top: 1px solid #fff; border-left: 1px solid #fff; border-right: 1px solid #777; border-bottom: 1px solid #777; }
.t.on { background: #fff; border-color: #888 #fff #fff #888; }
.sep { width: 11px; height: 16px; flex: none; background: repeating-linear-gradient(#333 0 1px, #f0f0f0 1px 2px) 5px 0 / 1px 100% no-repeat; }
.dd { width: 9px; height: 20px; display: flex; align-items: center; justify-content: center; }
.dd.wide { width: 11px; }
.dd::before { content: ""; border: 3px solid transparent; border-top-color: #000; border-bottom: 0; }
.dd.dim::before { border-width: 2px 2px 0; border-top-color: #555; }
.spin { display: flex; width: 75px; height: 20px; margin: 0 4px; }
.spin input { flex: 1; min-width: 0; border: 1px solid #888; border-right: 0; border-bottom-color: #eee; background: #fff; padding: 0 4px 0 2px; text-align: right; font: 12px "Liberation Mono", monospace; color: #333; }
.spin div { width: 14px; display: flex; flex-direction: column; border-right: 1px solid #777; border-bottom: 1px solid #777; }
.spin button { flex: 1; display: flex; align-items: center; justify-content: center; border-bottom: 1px solid #bbb; }
.spin button::before { content: ""; border: 4px solid transparent; }
.spin .up::before { border-bottom: 5px solid #000; border-top: 0; }
.spin .dn::before { border-top: 5px solid #000; border-bottom: 0; }
.toolbar label { margin: 0 5px 0 6px; color: #777; font: 11px "Noto Sans", sans-serif; width: 39px; }
.combo { position: relative; width: 135px; height: 20px; margin-right: 3px; }
.combo select { appearance: none; display: block; width: 100%; height: 100%; border: 1px solid #888; border-right-color: #fff; border-bottom-color: #fff; background: #f0f0f0; border-radius: 0; }
.comboarrow { position: absolute; right: 0; top: 2px; width: 17px; height: 17px; display: grid; place-items: center; background: #f0f0f0; border: 1px solid; border-color: #fff #777 #777 #fff; pointer-events: none; }

.wave {
  flex: 1;
  min-height: 0;
  display: grid;
  grid-template-columns: 158px 100px minmax(0, 1fr) 16px;
  grid-template-rows: 18px minmax(0, 1fr) 39px 18px;
  gap: 3px;
  padding: 2px 3px 2px 4px;
  background: #fff;
  border-top: 1px solid #bbb;
  color: #fff;
}
.head { background: #808080; }
.namehead { display: flex; align-items: center; padding-left: 7px; }
.namehead .dd { margin-left: -2px; }
.msgs { text-align: right; padding-right: 5px; line-height: 18px; }
.black { background: #000; }
.cursorline { display: block; width: 2px; height: 100%; margin-left: 3px; background: #f5dc50; }
.names, .values { background: #808080; padding-top: 2px; overflow: hidden; }
.names { border-left: 8px solid #fff; }
.names li { display: flex; align-items: center; justify-content: flex-start; gap: 5px; height: 17px; padding-left: 21px; position: relative; white-space: nowrap; }
.values li { height: 17px; line-height: 17px; padding-left: 2px; }
.plus { position: absolute; left: 5px; top: 4px; width: 10px; height: 10px; background: linear-gradient(#000, #000) 50% 50% / 6px 2px no-repeat, linear-gradient(#000, #000) 50% 50% / 2px 6px no-repeat, #fff; }
.plus::after { content: ""; position: absolute; left: 10px; top: 5px; width: 6px; height: 1px; background: #ddd; }
.endline { display: flex; align-items: center; height: 7px; padding-right: 4px; margin: -2px 0 0 2px; }
.endline i { flex: 1; height: 1px; background: #000; }
.endmark { width: 4px; height: 7px; }
.plot, .ruler { background: #000; min-width: 0; overflow: hidden; }
.busval text { fill: #fff; font-size: 11px; }
.ticks text { fill: #19e619; font-size: 11px; text-anchor: middle; }
.curtext { fill: #f2d21c; font-size: 11px; }

.curs { background: #808080; display: flex; flex-direction: column; text-align: right; }
.now { height: 22px; line-height: 22px; padding-right: 10px; display: flex; align-items: center; justify-content: flex-end; }
.cur { flex: 1; display: flex; align-items: stretch; }
.minis { display: flex; gap: 1px; width: 48px; padding-left: 9px; align-items: center; flex: none; }
.now .minis { margin-right: auto; }
.curname, .curval { flex: 1; background: #fff; color: #000; padding-right: 9px; line-height: 17px; }

.sb { width: 16px; height: 16px; background: #f0f0f0; display: grid; place-items: center; border: 1px solid; border-color: #fff #777 #777 #fff; }
.thumb { flex: 1; background: #f0f0f0; border: 1px solid; border-color: #fff #777 #777 #fff; }
.trough { flex: 1; background: #f8f8f8; }
.vscroll { display: flex; flex-direction: column; background: #d0d0d0; padding-top: 1px; border-right: 1px solid #777; }
.hs { display: flex; background: #999; border: 1px solid #777; border-right-color: #ddd; }
.names-hs { border-left-width: 8px; }
.tri { border: 4px solid transparent; }
.tri.u { border-bottom-color: #000; border-top: 0; }
.tri.d { border-top-color: #000; border-bottom: 0; }
.tri.l { border-right: 5px solid #000; border-left: 0; }
.tri.r { border-left: 5px solid #000; border-right: 0; }
.off .tri.l { border-right-color: #999; }
.off .tri.r { border-left-color: #999; }

.status { display: flex; height: 22px; padding: 1px 0 1px 3px; gap: 1px; }
.range { width: 170px; border: 1px solid; border-color: #888 #888 #fff #888; padding-left: 4px; line-height: 19px; }
.rest { flex: 1; border-top: 1px solid #888; }
.gripper { align-self: flex-end; }
.ime { position: absolute; right: 131px; bottom: 0; height: 23px; padding: 0 3px 0 0; display: flex; align-items: center; gap: 6px; background: #fff; border: 1px solid #ccd8e4; }
.logo { width: 28px; height: 26px; }
.taskbar { display: flex; flex: none; height: 4px; background: linear-gradient(90deg, #0a1420 48px, #303030 48px, #303030 392px, #06101a 392px); }
.taskbar .a { width: 48px; margin-left: 737px; background: #a5683a; }
.taskbar .b { width: 48px; margin-left: 50px; background: #30343c; }
```
